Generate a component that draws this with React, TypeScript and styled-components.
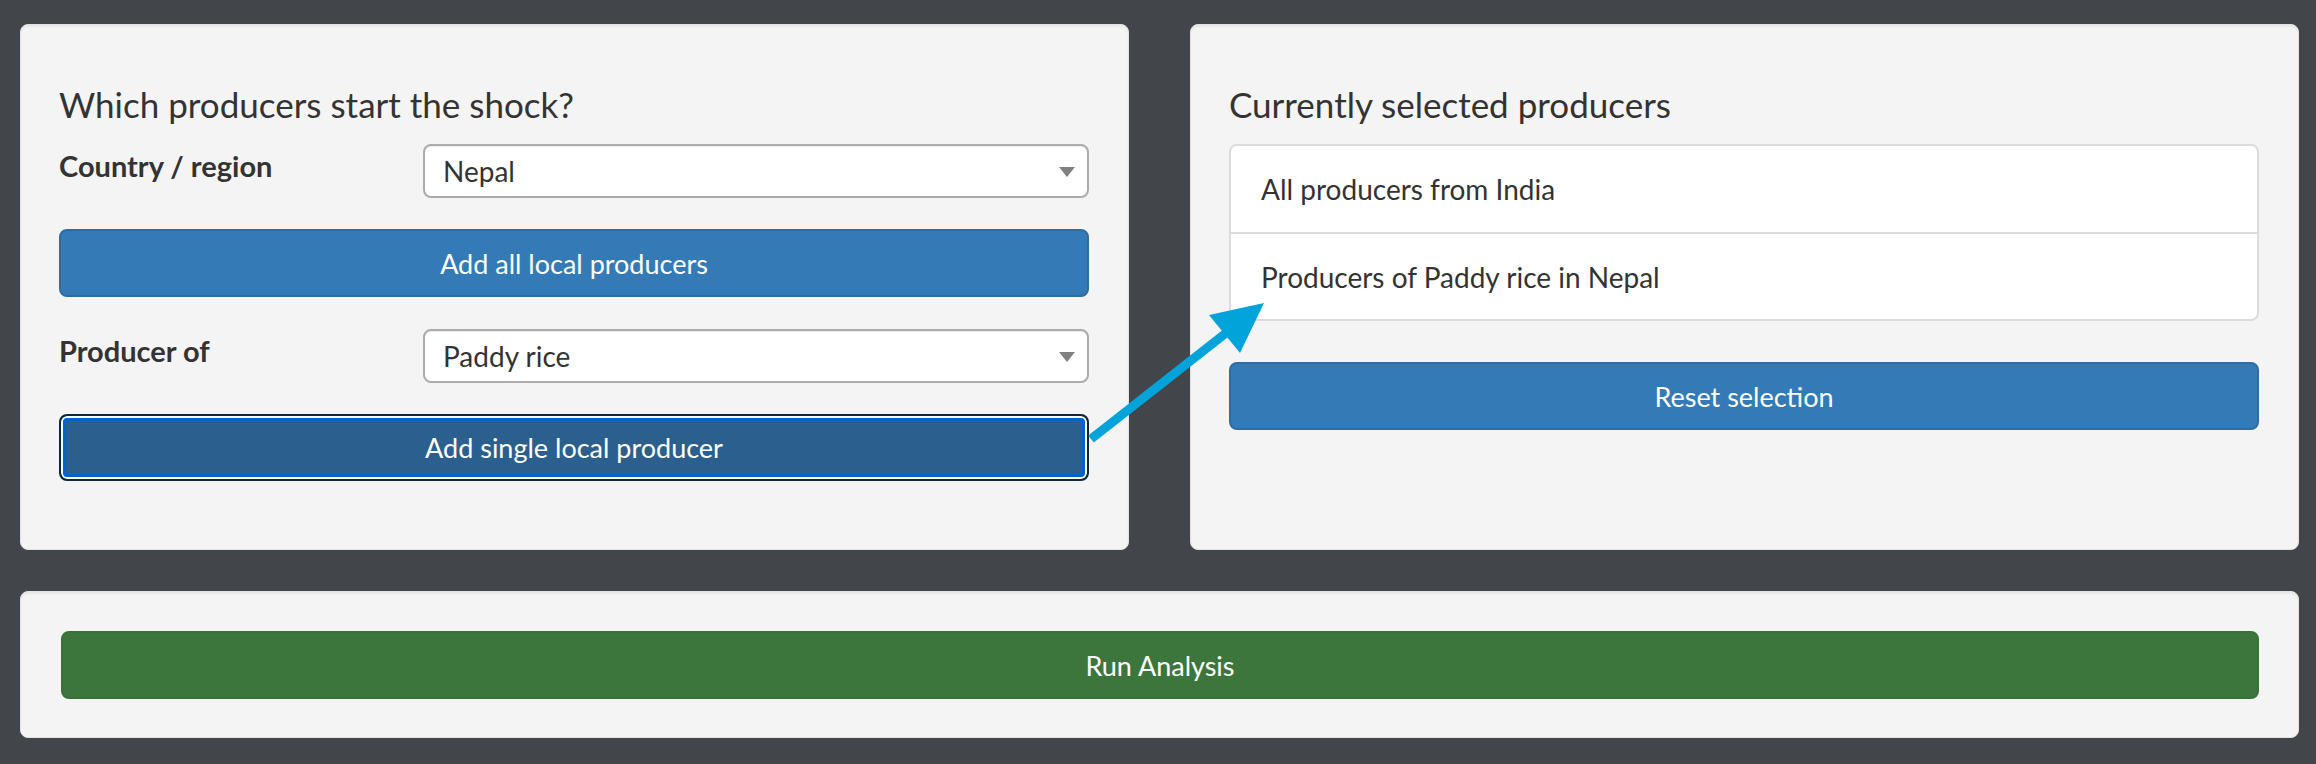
import styled, { createGlobalStyle } from "styled-components";

const GlobalStyle = createGlobalStyle`
  html, body {
    margin: 0;
    padding: 0;
    background: #42464b;
  }
  body {
    font-family: Lato, "Open Sans", "Liberation Sans", sans-serif;
    color: #333;
  }
`;

const Page = styled.main`
  position: relative;
  width: 2316px;
  height: 764px;
  box-sizing: border-box;
  padding: 24px 17px 0 20px;
  display: flex;
  flex-direction: column;
  gap: 41px;
`;

const TopRow = styled.div`
  display: grid;
  grid-template-columns: 1fr 1fr;
  gap: 61px;
  height: 526px;
`;

const Well = styled.section`
  box-sizing: border-box;
  background: #f4f4f4;
  border: 1px solid #e3e3e3;
  border-radius: 8px;
  box-shadow: inset 0 2px 2px rgba(0, 0, 0, 0.05);
  padding: 59px 39px 0 38px;
  display: flex;
  flex-direction: column;
`;

const BottomWell = styled(Well)`
  height: 147px;
  padding: 39px 39px 0 40px;
`;

const Heading = styled.h4`
  margin: 0 0 20px;
  font-size: 35px;
  line-height: 40px;
  font-weight: 400;
  color: #333;
`;

const FieldRow = styled.div`
  display: grid;
  grid-template-columns: 364px 1fr;
  align-items: start;
  margin-bottom: 31px;
`;

const Label = styled.label`
  padding-top: 2px;
  font-size: 29px;
  line-height: 40px;
  font-weight: 700;
  color: #333;
`;

const SelectBox = styled.div`
  position: relative;
  box-sizing: border-box;
  height: 54px;
  display: flex;
  align-items: center;
  padding: 0 40px 0 18px;
  background: #fff;
  border: 2px solid #ababab;
  border-radius: 8px;
  box-shadow: inset 0 1px 1px rgba(0, 0, 0, 0.08);
  font-size: 28px;
  color: #333;

  &::after {
    content: "";
    position: absolute;
    right: 12px;
    top: 21px;
    border-left: 8px solid transparent;
    border-right: 8px solid transparent;
    border-top: 10px solid #808080;
  }
`;

const Button = styled.button<{ $tone?: "blue" | "green"; $focused?: boolean }>`
  box-sizing: border-box;
  width: 100%;
  height: ${(p) => (p.$focused ? "67px" : "68px")};
  display: flex;
  align-items: center;
  justify-content: center;
  font-family: inherit;
  font-size: 27px;
  color: #fff;
  border-radius: 8px;
  cursor: pointer;
  background: ${(p) =>
    p.$focused ? "#2a5f8e" : p.$tone === "green" ? "#3d763d" : "#337ab7"};
  border: 2px solid
    ${(p) =>
      p.$focused ? "#10263a" : p.$tone === "green" ? "#3a703a" : "#2e6da4"};
  box-shadow: ${(p) =>
    p.$focused ? "inset 0 0 0 2px #fff, inset 0 0 0 5px #0062d2" : "none"};
`;

const SpacedButton = styled(Button)`
  margin-bottom: 32px;
`;

const ListGroup = styled.ul`
  margin: 0 0 41px;
  padding: 0;
  list-style: none;
  background: #fff;
  border: 2px solid #dcdcdc;
  border-radius: 8px;
`;

const ListItem = styled.li`
  box-sizing: border-box;
  height: 86px;
  display: flex;
  align-items: center;
  padding: 0 30px;
  font-size: 28px;
  color: #333;

  & + & {
    height: 87px;
    border-top: 2px solid #dcdcdc;
  }
`;

const ArrowLayer = styled.svg`
  position: absolute;
  left: 0;
  top: 0;
  pointer-events: none;
`;

export default function App() {
  return (
    <>
      <GlobalStyle />
      <Page>
        <TopRow>
          <Well>
            <Heading>Which producers start the shock?</Heading>
            <FieldRow>
              <Label>Country / region</Label>
              <SelectBox>Nepal</SelectBox>
            </FieldRow>
            <SpacedButton>Add all local producers</SpacedButton>
            <FieldRow>
              <Label>Producer of</Label>
              <SelectBox>Paddy rice</SelectBox>
            </FieldRow>
            <Button $focused>Add single local producer</Button>
          </Well>
          <Well>
            <Heading>Currently selected producers</Heading>
            <ListGroup>
              <ListItem>All producers from India</ListItem>
              <ListItem>Producers of Paddy rice in Nepal</ListItem>
            </ListGroup>
            <Button>Reset selection</Button>
          </Well>
        </TopRow>
        <BottomWell>
          <Button $tone="green">Run Analysis</Button>
        </BottomWell>
        <ArrowLayer width="2316" height="764" viewBox="0 0 2316 764">
          <line x1="1091" y1="439" x2="1226" y2="333" stroke="#00a4da" strokeWidth="9" />
          <polygon points="1264,303 1209,315 1240,353" fill="#00a4da" />
        </ArrowLayer>
      </Page>
    </>
  );
}
